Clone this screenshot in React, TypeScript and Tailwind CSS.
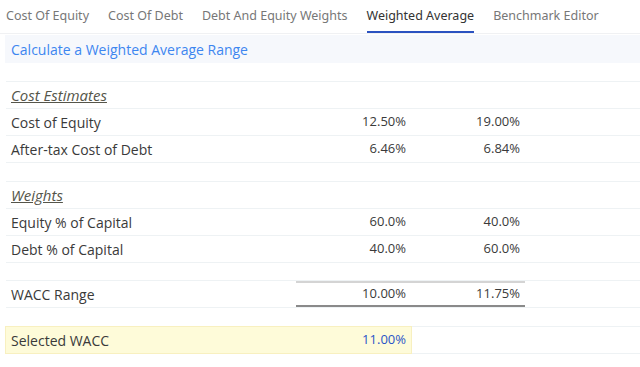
const tabs = [
  'Cost Of Equity',
  'Cost Of Debt',
  'Debt And Equity Weights',
  'Weighted Average',
  'Benchmark Editor',
];

function Row({
  label,
  low,
  high,
  heading,
}: {
  label: string;
  low?: string;
  high?: string;
  heading?: boolean;
}) {
  return (
    <div className="flex h-[27px] items-center border-b border-[#eef2f4]">
      <div
        className={
          heading
            ? 'w-[290px] pl-[5px] text-[15px] italic underline text-[#55554a]'
            : 'w-[290px] pl-[5px] text-[14px]'
        }
      >
        {label}
      </div>
      <div className="w-[115px] pr-[5px] text-right">{low}</div>
      <div className="w-[114px] pr-[5px] text-right">{high}</div>
    </div>
  );
}

export default function App() {
  return (
    <div className="h-[367px] w-[640px] overflow-hidden bg-white font-['Open_Sans',sans-serif] text-[13px] text-[#3a3a3a]">
      <div className="flex h-[34px] gap-[19px] border-b border-[#f0f1f3] px-[6px] font-['Noto_Sans',sans-serif] text-[12.5px] text-[#777]">
        {tabs.map((tab) => (
          <div
            key={tab}
            className={
              tab === 'Weighted Average'
                ? 'flex items-center border-b-2 border-[#2b52c0] pt-[1px] text-[#333]'
                : 'flex items-center border-b-2 border-transparent pt-[1px]'
            }
          >
            {tab}
          </div>
        ))}
      </div>

      <div className="ml-[5px] mt-[1px] flex h-[28px] items-center bg-[#f6f8fc] px-[6px] text-[14px] text-[#3d86f0]">
        Calculate a Weighted Average Range
      </div>

      <div className="ml-[6px] mt-[18px] border-t border-[#eef2f4]">
        <Row label="Cost Estimates" heading />
        <Row label="Cost of Equity" low="12.50%" high="19.00%" />
        <Row label="After-tax Cost of Debt" low="6.46%" high="6.84%" />
        <div className="h-[19px] border-b border-[#eef2f4]" />
        <Row label="Weights" heading />
        <Row label="Equity % of Capital" low="60.0%" high="40.0%" />
        <Row label="Debt % of Capital" low="40.0%" high="60.0%" />
        <div className="h-[18px] border-b border-[#eef2f4]" />
        <div className="flex h-[27px] items-center border-b border-[#eef2f4]">
          <div className="w-[290px] pl-[5px] text-[14px]">WACC Range</div>
          <div className="flex h-full w-[229px] items-center border-t-2 border-b-2 border-t-[#d4d4d4] border-b-[#8a8a8a]">
            <div className="w-[115px] pr-[5px] text-right">10.00%</div>
            <div className="w-[114px] pr-[5px] text-right">11.75%</div>
          </div>
        </div>
        <div className="h-[19px] border-b border-[#eef2f4]" />
        <div className="flex h-[27px] border-b border-[#eef2f4]">
          <div className="flex w-[405px] items-center bg-[#fefbd9] ring-1 ring-[#f8f0c0]">
            <div className="w-[290px] pl-[5px] text-[14px]">Selected WACC</div>
            <div className="w-[115px] pr-[5px] text-right text-[#2a55c8]">11.00%</div>
          </div>
        </div>
      </div>
    </div>
  );
}
